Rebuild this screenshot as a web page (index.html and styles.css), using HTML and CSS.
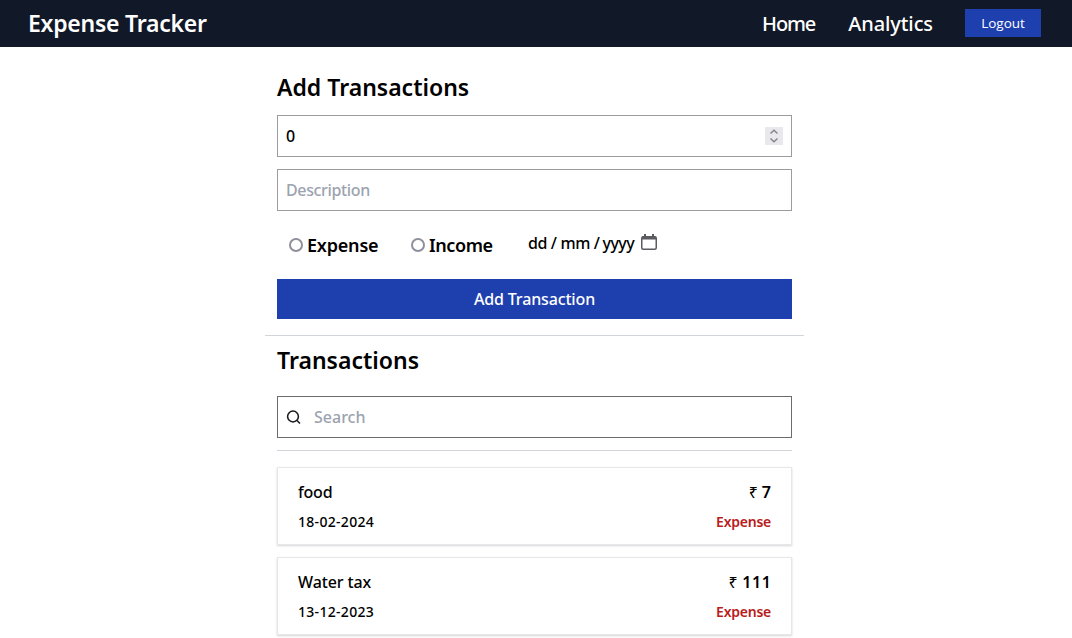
FILE: index.html
```html
<!DOCTYPE html>
<html lang="en">
<head>
<meta charset="utf-8">
<title>Expense Tracker</title>
<link rel="stylesheet" href="styles.css">
</head>
<body>
<header class="navbar">
  <div class="brand">Expense Tracker</div>
  <nav class="links">
    <a class="home">Home</a>
    <a class="analytics">Analytics</a>
    <button class="logout"><span>Logout</span></button>
  </nav>
</header>
<main class="page">
  <section class="form">
    <h1 class="title add-title"><span>Add Transactions</span></h1>
    <div class="field"><span class="zero">0</span>
      <span class="spinner"><svg width="18" height="18" viewBox="0 0 18 18"><path d="M5.500 6.500 9 3.300 12.500 6.500M5.500 11.500 9 14.700 12.500 11.500"/></svg></span>
    </div>
    <div class="field muted"><span class="desc">Description</span></div>
    <div class="options">
      <label class="option"><span class="radio"></span><span class="lbl-exp">Expense</span></label>
      <label class="option second"><span class="radio"></span><span class="lbl-inc">Income</span></label>
      <div class="date"><span class="dd">dd</span><span>/</span><span class="mm">mm</span><span>/</span><span class="yy">yyyy</span>
        <svg class="calendar" width="16" height="17" viewBox="0 0 16 17"><rect x=".75" y="2.750" width="14.500" height="12.500" rx="1.500"/><path class="solid" d="M1 2.500h14v3H1zM3 0h2v3H3zM11 0h2v3h-2z"/></svg>
      </div>
    </div>
    <button class="submit"><span>Add Transaction</span></button>
  </section>
  <section class="list">
    <h2 class="title list-title"><span>Transactions</span></h2>
    <div class="field search">
      <svg width="16" height="16" viewBox="0 0 16 16"><circle cx="7" cy="7.500" r="5.400"/><path d="m11 11.500 3 3"/></svg>
      <span class="ph">Search</span>
    </div>
    <div class="rule"></div>
    <article class="card">
      <div class="row"><span class="food">food</span><span class="amount"><span class="rupee">₹</span><span>7</span></span></div>
      <div class="row small"><span class="day">18-02-2024</span><span class="kind">Expense</span></div>
    </article>
    <article class="card">
      <div class="row"><span class="water">Water tax</span><span class="amount wide"><span class="rupee">₹</span><span>111</span></span></div>
      <div class="row small"><span class="day">13-12-2023</span><span class="kind">Expense</span></div>
    </article>
  </section>
</main>
</body>
</html>
```
FILE: styles.css
```css
* { box-sizing: border-box; }
body { margin: 0; height: 638px; overflow: hidden; background: #fff; color: #000; font: 500 16px/24px "Noto Sans", "Open Sans", sans-serif; }
button { border: 0; border-radius: 0; padding: 0; font: inherit; color: #fff; background: #1e40af; }
svg { fill: none; }
.navbar { height: 47px; background: #111827; color: #fff; display: flex; align-items: center; justify-content: space-between; padding: 0 31px 0 28px; }
.brand { font-size: 23px; line-height: 32px; font-weight: 600; letter-spacing: -.25px; padding-bottom: 1px; }
.links { display: flex; align-items: center; gap: 32px; font-size: 20px; line-height: 28px; }
.home { letter-spacing: -1.1px; margin-right: 1px; }
.analytics { letter-spacing: -.1px; }
.logout { width: 76px; height: 28px; margin-top: -1px; font: 500 13.5px/28px "Open Sans", sans-serif; }
.page { width: 539px; margin-left: 265px; }
.form { padding: 22px 12px 16px; height: 289px; border-bottom: 1px solid #d1d5db; }
.title { margin: 0; font-size: 23px; line-height: 36px; font-weight: 600; }
.add-title { margin-bottom: 10px; }
.field { height: 42px; border: 1px solid #9b9ba0; padding: 0 8px; display: flex; align-items: center; justify-content: space-between; }
.field + .field { margin-top: 12px; }
.muted, .ph { color: #9ca3af; }
.desc { letter-spacing: -.35px; }
.spinner { width: 18px; height: 18px; background: #e9e9ed; }
.spinner svg { display: block; stroke: #85858c; stroke-width: 1.5; }
.options { display: flex; height: 68px; padding-left: 12px; }
.option { display: flex; align-items: center; gap: 4px; height: 68px; font-size: 18px; font-weight: 600; width: 122px; }
.lbl-exp { letter-spacing: -.2px; }
.lbl-inc { letter-spacing: -.4px; }
.radio { width: 14px; height: 14px; border: 2px solid #8f8f9d; border-radius: 50%; margin-top: -1px; }
.second { width: 117px; }
.date { display: flex; align-items: center; height: 64px; gap: 4px; letter-spacing: -.5px; }
.yy { margin-left: -1px; letter-spacing: -.55px; }
.calendar { margin: -2px 0 0 3px; stroke: #5b5b60; stroke-width: 1.5; }
.solid { fill: #5b5b60; stroke: none; }
.submit { display: block; width: 100%; height: 40px; line-height: 40px; letter-spacing: -.15px; }
.list { padding: 6px 12px 0; }
.list-title { margin-bottom: 18px; }
.search { border-color: #6b6b70; justify-content: flex-start; gap: 12px; }
.search svg { stroke: #17171c; stroke-width: 1.5; }
.rule { height: 1px; background: #d1d5db; margin: 12px 0 16px; }
.card { height: 78px; margin-bottom: 12px; padding: 12px 20px 0; border: 1px solid #e5e7eb; box-shadow: 0 1px 2px rgba(0,0,0,.16); }
.row { display: flex; justify-content: space-between; }
.small { margin-top: 6px; font-size: 14px; }
.day { letter-spacing: .3px; }
.food { letter-spacing: -.2px; }
.water { letter-spacing: -.1px; }
.amount { display: flex; gap: 4px; font-weight: 600; }
.wide { letter-spacing: .6px; margin-right: -.6px; }
.rupee { font-weight: 400; }
.kind { color: #b91c1c; font-weight: 600; letter-spacing: -.25px; }
```
